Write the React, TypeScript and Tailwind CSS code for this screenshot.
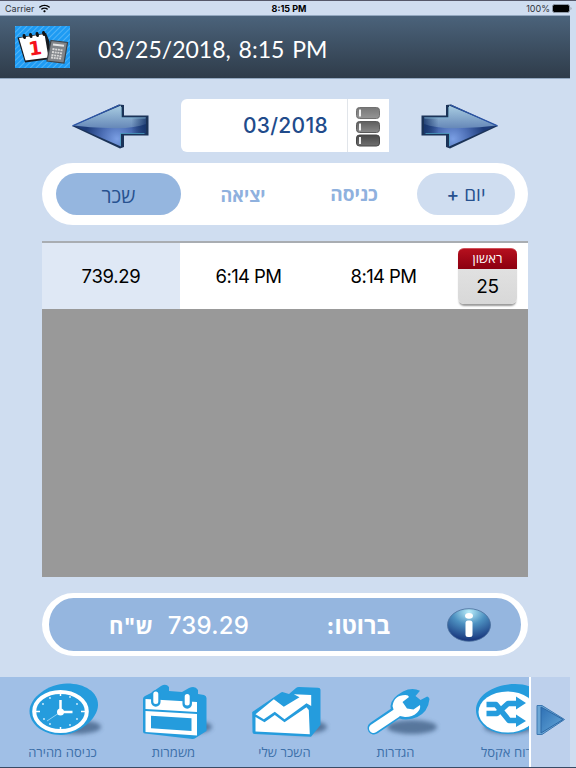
import { FaWifi } from "react-icons/fa";

const tabs = [
  { id: 1, name: "שכר", style: "w-[125px] bg-[#95b6df] text-[#27518f] text-[20px] rounded-full" },
  { id: 2, name: "יציאה", style: "w-[124px] text-[#8fb1de] text-[18px] font-bold" },
  { id: 3, name: "כניסה", style: "w-[98px] text-[#8fb1de] text-[19px] font-bold" },
  { id: 4, name: "יום +", style: "ml-[14px] w-[98px] bg-[#cfddf0] text-[#27518f] text-[19px] font-medium rounded-full" },
];

export default function App() {
  return (
    <div className="flex h-[768px] w-[576px] flex-col overflow-hidden border-t border-[#55586a] bg-[#cfddf0] font-['Inter','Open_Sans','Liberation_Sans',sans-serif]">
      <StatusBar />
      <Header />
      <MonthPicker />
      <TabBar />
      <ShiftTable />
      <TotalBar />
      <BottomMenu />
    </div>
  );
}

/* ===================== Status bar ===================== */
function StatusBar() {
  return (
    <div className="flex h-[14px] shrink-0 items-center justify-between pr-1 pl-[5px] text-[9px] leading-none text-[#30343b]">
      <div className="flex w-[122px] items-center gap-1">
        <span>Carrier</span>
        <FaWifi size={11} className="text-black" />
      </div>
      <span className="font-bold text-black">8:15 PM</span>
      <div className="flex w-[121px] items-center justify-end gap-[2px]">
        <span>100%</span>
        <svg width="20" height="9" viewBox="0 0 20 9">
          <rect x="0.5" y="0.5" width="17" height="8" rx="2" fill="#000" stroke="#8f9aa8" />
          <path d="M18.500 3v3q1-.3 1-1.500T18.500 3" fill="#8f9aa8" />
        </svg>
      </div>
    </div>
  );
}

/* ===================== Header ===================== */
function Header() {
  return (
    <header className="flex h-16 w-[570px] shrink-0 items-center border-y border-[#93a8c0] bg-linear-to-b from-[#4b637b] to-[#2f3c4a] pl-[15px]">
      <AppLogo />
      <h1 className="mt-1 ml-7 font-['Lato',sans-serif] text-[23px] leading-none whitespace-nowrap text-white [word-spacing:2px]">
        03/25/2018, 8:15 PM
      </h1>
    </header>
  );
}

function AppLogo() {
  return (
    <svg width="55" height="42" viewBox="0 0 55 42">
      <defs>
        <pattern id="stripes" width="4" height="4" patternUnits="userSpaceOnUse" patternTransform="rotate(45)">
          <rect width="4" height="4" fill="#1e9bf3" />
          <rect width="0.8" height="4" fill="#5db9f7" />
        </pattern>
      </defs>
      <rect width="55" height="42" fill="url(#stripes)" />
      <path d="M2.500 11.500 31 7l3.500 8.500L36 33 10 36.500z" fill="#151a20" />
      <path d="M4 12 29.500 8 33.500 31.500 10.500 34.500z" fill="#fff" />
      <path d="m9 9.500.5 2M15.500 8.500l.5 2M22 7.500l.5 2M28.500 6.500l.5 2" stroke="#111" strokeWidth="3" strokeLinecap="round" />
      <text x="13.500" y="29" fontSize="19" fontWeight="bold" fill="#f5121b" fontFamily="DejaVu Sans" transform="rotate(-8 20 22)">1</text>
      <path d="m36 14.500 16.500 2-3.500 20.500-17-2z" fill="#808489" stroke="#3e4247" strokeWidth="1.200" />
      <path d="m38 18.500 11 1.300" stroke="#e5e5e5" strokeWidth="2" />
      <path d="m37.500 23 10 1.300m-10.500 1.700 10 1.300m-10.500 1.700 10 1.300m-10.500 1.200 10 1.200" stroke="#d8d8d8" strokeWidth="1.800" strokeDasharray="2 .7" />
    </svg>
  );
}

/* ===================== Month picker ===================== */
function MonthPicker() {
  return (
    <div className="mt-5 flex h-[53px] shrink-0 items-center pl-[71px]">
      <ArrowIcon />
      <div className="ml-8 flex h-full w-[208px] rounded-l-md bg-white">
        <div className="flex w-[167px] items-center justify-end border-r border-[#e1e5ea] pt-px pr-[19px] text-[21px] font-medium tracking-[0.3px] text-[#214b8b]">
          03/2018
        </div>
        <div className="flex flex-1 items-center justify-center pt-[2px] pr-px">
          <ListIcon />
        </div>
      </div>
      <div className="ml-8 -scale-x-100">
        <ArrowIcon />
      </div>
    </div>
  );
}

function ArrowIcon() {
  return (
    <svg width="78" height="46" viewBox="0 0 78 46" className="block">
      <defs>
        <linearGradient id="arrowTop" x1="0" y1="0" x2="0" y2="1">
          <stop offset="0" stopColor="#a9cde2" />
          <stop offset="1" stopColor="#6688b8" />
        </linearGradient>
        <radialGradient id="arrowLow" gradientUnits="userSpaceOnUse" cx="46" cy="36" r="32">
          <stop offset="0" stopColor="#7b9fe4" />
          <stop offset="0.5" stopColor="#4b6db4" />
          <stop offset="1" stopColor="#1d3b78" />
        </radialGradient>
        <linearGradient id="arrowEnd" x1="0" y1="0" x2="1" y2="0">
          <stop offset="0.8" stopColor="#17356a" stopOpacity="0" />
          <stop offset="1" stopColor="#17356a" stopOpacity="0.85" />
        </linearGradient>
      </defs>
      <path d="M1 23 48 1.500l5 .5v10.500h24.500v20H53V44l-4 1.500z" fill="#1b3358" />
      <path d="M2.500 22.500 50 2.500v12H75v16H50v13z" fill="url(#arrowLow)" />
      <path d="M2.500 22.500 50 2.500v12H75V21q-12 5-38 4-18-.5-34.500-2.500" fill="url(#arrowTop)" />
      <path d="M2.500 22.500 50 2.500v12H75v16H50v13z" fill="url(#arrowEnd)" />
      <path d="M1.500 22.800 48.500 2" stroke="#2d56a8" strokeWidth="1.300" fill="none" />
      <path d="M50.500 4v11h24" stroke="#7fb4cf" strokeWidth="0.7" fill="none" />
      <path d="M49.500 42.500v-12h24" stroke="#4da0c0" strokeWidth="0.8" fill="none" />
    </svg>
  );
}

function ListIcon() {
  return (
    <svg width="26" height="42" viewBox="0 0 26 42">
      <defs>
        <linearGradient id="bar1" x1="0" y1="0" x2="0" y2="1">
          <stop offset="0" stopColor="#777" />
          <stop offset="1" stopColor="#959595" />
        </linearGradient>
        <linearGradient id="bar2" x1="0" y1="0" x2="0" y2="1">
          <stop offset="0" stopColor="#5e5e5e" />
          <stop offset="1" stopColor="#8a8a8a" />
        </linearGradient>
        <linearGradient id="bar3" x1="0" y1="0" x2="0" y2="1">
          <stop offset="0" stopColor="#484848" />
          <stop offset="1" stopColor="#707070" />
        </linearGradient>
      </defs>
      <rect x="1.500" y="1.500" width="23" height="11" rx="3" fill="url(#bar1)" stroke="#707070" />
      <rect x="1.500" y="15.500" width="23" height="11" rx="3" fill="url(#bar2)" stroke="#5a5a5a" />
      <rect x="1.500" y="29" width="23" height="11" rx="3" fill="url(#bar3)" stroke="#464646" />
      <path d="M5 3.500v7M5 17.500v7M5 31v7" stroke="#fff" strokeWidth="1.800" />
    </svg>
  );
}

/* ===================== Tabs ===================== */
function TabBar() {
  return (
    <div className="mt-[11px] ml-[42px] flex h-[62px] w-[486px] shrink-0 items-center rounded-full bg-white pl-[14px]">
      {tabs.map((tab) => (
        <button key={tab.id} dir="rtl" className={`flex h-[42px] items-center justify-center pt-[3px] ${tab.style}`}>
          {tab.name}
        </button>
      ))}
    </div>
  );
}

/* ===================== Shift table ===================== */
function ShiftTable() {
  return (
    <div className="mt-4 ml-[42px] h-[336px] w-[486px] shrink-0 border-t-2 border-[#a9adb2] bg-[#999]">
      <div className="flex h-[66px] items-center bg-white text-[18.5px] text-black">
        <div className="flex h-full w-[138px] items-center justify-center bg-[#dfe8f5] pt-px tracking-[-0.3px]">739.29</div>
        <div className="w-[137px] pt-px text-center tracking-[-0.6px]">6:14 PM</div>
        <div className="w-[133px] pt-px text-center tracking-[-0.6px]">8:14 PM</div>
        <DayBadge />
      </div>
    </div>
  );
}

function DayBadge() {
  return (
    <div className="ml-2 flex h-[56px] w-[59px] flex-col rounded-md bg-linear-to-b from-[#e6e6e6] to-[#d8d8d8] text-center shadow-[0_3px_2px_-1px_#999]">
      <div dir="rtl" className="h-[22px] rounded-t-md border-t border-[#d0505a] bg-linear-to-b from-[#b5101e] to-[#8c0010] text-[13px] leading-[19px] text-white">
        ראשון
      </div>
      <div className="text-[19px] leading-[35px] tracking-[-0.3px]">25</div>
    </div>
  );
}

/* ===================== Total ===================== */
function TotalBar() {
  return (
    <div className="mt-4 ml-[42px] flex h-[63px] w-[486px] shrink-0 items-center rounded-full border-x-[7px] border-y-[5px] border-white bg-[#95b6df] text-[24px] font-medium text-white">
      <div className="flex w-[200px] items-center justify-between pt-[3px] pl-[60px]">
        <span dir="rtl" className="text-[22px] font-bold">ש"ח</span>
        <span className="tracking-[0.2px]">739.29</span>
      </div>
      <span dir="rtl" className="ml-[74px] w-[67px] pt-[3px] text-[23.5px] font-bold">ברוטו:</span>
      <InfoIcon />
    </div>
  );
}

function InfoIcon() {
  return (
    <svg width="46" height="36" viewBox="0 0 46 36" className="ml-[56px]">
      <defs>
        <radialGradient id="infoFill" cx="0.5" cy="0.1" r="0.85">
          <stop offset="0" stopColor="#b9edfa" />
          <stop offset="0.45" stopColor="#4d91c1" />
          <stop offset="1" stopColor="#1a3a80" />
        </radialGradient>
      </defs>
      <ellipse cx="23" cy="18" rx="21.500" ry="16.300" fill="url(#infoFill)" stroke="#4a6f9c" strokeWidth="0.800" />
      <ellipse cx="23" cy="8.800" rx="4" ry="2.900" fill="#fff" />
      <rect x="19.500" y="13.500" width="7" height="16.500" rx="2.500" fill="#fff" />
    </svg>
  );
}

/* ===================== Bottom menu ===================== */
function BottomMenu() {
  return (
    <nav className="mt-[21px] flex h-[91px] w-full shrink-0 border-b border-[#394b65]">
      <div className="flex w-[529px] overflow-hidden bg-[#a0bfe6]">
        <MenuItem label="כניסה מהירה" style="ml-[7px] w-[111px]" icon={<ClockIcon />} />
        <MenuItem label="משמרות" style="w-[111px]" icon={<CalendarIcon />} />
        <MenuItem label="השכר שלי" style="w-[111px]" icon={<ChartIcon />} />
        <MenuItem label="הגדרות" style="w-[111px]" icon={<WrenchIcon />} />
        <MenuItem label="דוח אקסל" style="w-[111px]" icon={<ShuffleIcon />} />
      </div>
      <div className="flex w-[41px] items-center justify-center border-l-2 border-white bg-[#bdd0ec]">
        <svg width="31" height="34" viewBox="0 0 31 34" className="mb-1">
          <defs>
            <linearGradient id="playFill" x1="0" y1="0" x2="1" y2="1">
              <stop offset="0" stopColor="#2e70b4" />
              <stop offset="1" stopColor="#66a8d9" />
            </linearGradient>
          </defs>
          <path d="M2 2.500h5L29.500 16.500 7 31.500H2z" fill="#6ba6d5" stroke="#3e78b2" />
          <path d="M6 4 28 16.500 6 30z" fill="url(#playFill)" stroke="#2c68a6" />
        </svg>
      </div>
    </nav>
  );
}

function MenuItem({ label, style, icon }: { label: string; style: string; icon: any }) {
  return (
    <div className={`flex shrink-0 flex-col items-center pt-1 ${style}`}>
      {icon}
      <span dir="rtl" className="mt-[3px] text-[13px] leading-4 whitespace-nowrap text-[#3c6fa9]">{label}</span>
    </div>
  );
}

function IconShadow({ x }: { x: number }) {
  return (
    <>
      <defs>
        <filter id="soft" x="-30%" y="-60%" width="160%" height="220%">
          <feGaussianBlur stdDeviation="2.200" />
        </filter>
      </defs>
      <ellipse cx={x} cy="46" rx="25" ry="7" fill="#415f84" opacity="0.75" filter="url(#soft)" />
    </>
  );
}

function ClockIcon() {
  return (
    <svg width="82" height="60" viewBox="0 0 82 60" className="overflow-visible">
      <IconShadow x={54} />
      <path d="M7.500 30C7.500 17 26 2.500 45 2.500 63 2.500 76 11 76 24 76 38 56 54 39 54 21 54 7.500 43 7.500 30" fill="#259cdd" />
      <ellipse cx="38.500" cy="30.500" rx="26.300" ry="19.500" fill="#259cdd" stroke="#fff" strokeWidth="4" />
      <path d="M38.500 19v12h12" stroke="#fff" strokeWidth="2.500" fill="none" />
      <path d="M38.500 31 25 40" stroke="#8fd0f3" />
      <circle cx="38.500" cy="31" r="3.500" fill="#fff" />
      <path d="M38.500 12v3M38.500 46v3M14 30.500h4M59 30.500h4" stroke="#fff" strokeWidth="1.500" />
      <g fill="#d7f1ff">
        <circle cx="28" cy="17" r="0.900" /><circle cx="48" cy="16" r="0.900" /><circle cx="21" cy="23" r="0.900" /><circle cx="55" cy="23" r="0.900" />
        <circle cx="22" cy="38" r="0.900" /><circle cx="28" cy="43" r="0.900" /><circle cx="48" cy="44" r="0.900" /><circle cx="55" cy="38" r="0.900" />
      </g>
    </svg>
  );
}

function CalendarIcon() {
  return (
    <svg width="82" height="60" viewBox="0 0 82 60" className="overflow-visible">
      <IconShadow x={54} />
      <path d="M10 18q0-2 2-3l6-3 10-7q5-3 8 1v4l13 1 7-4q6-3 9 2v4l6 1q2.500 1 2.500 3v33l-11 7q-1 1-3 1L12 52.500q-2 0-2-2z" fill="#259cdd" />
      <path d="m12.500 18 51.500 3v10l-51.500-3zM12.500 30 64 33v21.500l-51.500-3.500zM18 34.700v12.600l40.500 2.700V37.300z" fill="#fff" fillRule="evenodd" />
      <path d="M22.800 14v7M54.200 16.500v6.500" stroke="#259cdd" strokeWidth="9.500" strokeLinecap="round" />
      <path d="M22.800 13v7.500M54.200 15.500V22" stroke="#fff" strokeWidth="5" strokeLinecap="round" />
    </svg>
  );
}

function ChartIcon() {
  return (
    <svg width="82" height="60" viewBox="0 0 82 60" className="overflow-visible">
      <IconShadow x={58} />
      <path d="M8.200 31 37 11.500q1-1 3 0l5 1.500 7-6q1-1 3-1l19 .7q2.500 0 2.500 2V44L67 55.700 10.500 53q-2 0-2-2z" fill="#259cdd" />
      <path d="m11.500 33.300 18.300-15 10 7.400 15.700-9.400-5.700-3L67.200 14v11l-4.700-2.700-22 16-9.700-7.600-11 7.600z" fill="#fff" />
      <path d="m11.500 36 9 5.300L30.800 34l9.700 7.300 22-15 2.300 2.700 1 24.300L11.500 50.500z" fill="#fff" />
    </svg>
  );
}

function WrenchIcon() {
  return (
    <svg width="82" height="60" viewBox="0 0 82 60" className="overflow-visible">
      <IconShadow x={57} />
      <path d="M19 47 41 32" stroke="#259cdd" strokeWidth="13" strokeLinecap="round" />
      <path d="M35.500 25Q36 17 48 10.500 57 6 65 9.700L60.500 15l5 4 6.700-3.500q2 .5 2.300 2.500-.5 6-4 11.500Q64 38 51 38.500 36 38 35.500 25" fill="#259cdd" />
      <path d="M18.500 47.500 41 32.500" stroke="#fff" strokeWidth="9" strokeLinecap="round" />
      <path d="M37.500 25q1.500-11 13-11 3 0 3.500 2l-6.500 5 4.500 6.500 6.500 1 6.500-4.500q1 4-3 7.700-5 4.500-12 4.300-11-.5-12.500-11" fill="#fff" />
    </svg>
  );
}

function ShuffleIcon() {
  return (
    <svg width="82" height="60" viewBox="0 0 82 60" className="overflow-visible">
      <IconShadow x={43} />
      <path d="M10 29C10 14 29 3 49 3s30 11 29 24C77 43 59 53 42 53 23 53 10 42 10 29" fill="#259cdd" />
      <ellipse cx="41.500" cy="31" rx="29" ry="20.500" fill="#fff" />
      <path d="M20.500 23.500H30L43 39.500h8M20.500 32.500H31l11-10h9" stroke="#259cdd" strokeWidth="5.500" strokeLinejoin="round" fill="none" />
      <path d="m50 15.500 10 6.500-10 6.500zM50 33.500l10 6.500-10 6z" fill="#259cdd" />
    </svg>
  );
}
